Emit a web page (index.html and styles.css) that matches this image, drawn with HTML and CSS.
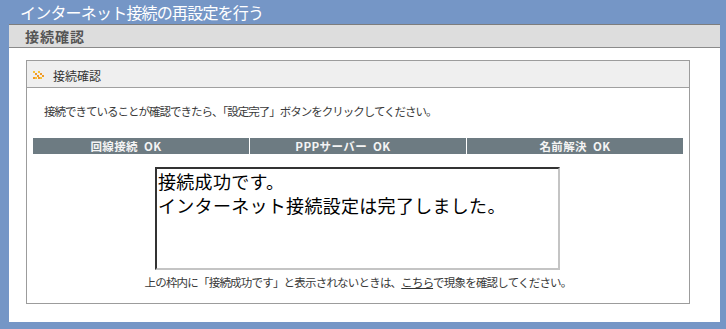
FILE: index.html
```html
<!DOCTYPE html>
<html lang="ja">
<head>
<meta charset="utf-8">
<link rel="stylesheet" href="styles.css">
</head>
<body>
<div class="title">インターネット接続の再設定を行う</div>
<div class="main">
  <div class="main-head">接続確認</div>
  <div class="panel">
    <div class="panel-head">
      <svg class="icon" width="11" height="8" viewBox="0 0 11 8">
        <rect x="0" y="0" width="2" height="2" fill="#f7c23a"/>
        <rect x="2" y="2" width="2" height="2" fill="#f09a28"/>
        <rect x="4" y="4" width="2" height="2" fill="#f09a28"/>
        <rect x="2" y="6" width="2" height="2" fill="#f7c23a"/>
        <rect x="5" y="0" width="2" height="2" fill="#f7c23a"/>
        <rect x="7" y="2" width="2" height="2" fill="#f09a28"/>
        <rect x="9" y="4" width="2" height="2" fill="#f09a28"/>
        <rect x="7" y="6" width="2" height="2" fill="#f7c23a"/>
        <rect x="0" y="6" width="2" height="2" fill="#f09a28"/>
        <rect x="5" y="6" width="2" height="2" fill="#f09a28"/>
      </svg>
      <span>接続確認</span>
    </div>
    <div class="panel-body">
      <p class="note">接続できていることが確認できたら、「設定完了」ボタンをクリックしてください。</p>
      <div class="status">
        <div class="cell shift">回線接続&nbsp;&nbsp;OK</div>
        <div class="cell shift">PPPサーバー&nbsp;&nbsp;OK</div>
        <div class="cell">名前解決&nbsp;&nbsp;OK</div>
      </div>
      <div class="result">接続成功です。<br>インターネット接続設定は完了しました。</div>
      <p class="foot">上の枠内に「接続成功です」と表示されないときは、<a class="link">こちら</a>で現象を確認してください。</p>
    </div>
  </div>
</div>
</body>
</html>
```
FILE: styles.css
```css
* { box-sizing: border-box; }
html, body { margin: 0; padding: 0; }
body {
  background: #7596c6;
  font-family: "Noto Sans CJK JP", "Noto Sans", sans-serif;
  width: 726px;
  height: 329px;
  overflow: hidden;
}
.title {
  height: 24px;
  line-height: 24px;
  padding-left: 20px;
  color: #ffffff;
  font-size: 16px;
  letter-spacing: -0.8px;
}
.main {
  margin: 0 6px 0 9px;
  height: 298px;
  background: #ffffff;
  overflow: hidden;
}
.main-head {
  height: 24px;
  border-top: 1px solid #7d7d7d;
  border-bottom: 1px solid #8a8a8a;
  background: #dddddd;
  color: #555555;
  font-weight: bold;
  font-size: 14px;
  line-height: 22px;
  padding-left: 16px;
  letter-spacing: 1px;
}
.panel {
  margin: 12px 0 0 17px;
  width: 664px;
  height: 244px;
  border: 1px solid #9c9c9c;
}
.panel-head {
  height: 27px;
  background: #efefef;
  border-bottom: 1px solid #a0a0a0;
  display: flex;
  align-items: center;
  padding: 2px 0 0 6px;
  font-size: 12px;
  color: #333333;
}
.icon { margin-right: 9px; display: block; }
.note {
  margin: 15px 0 0 17px;
  font-size: 11.5px;
  line-height: 16px;
  color: #3a3a3a;
  letter-spacing: -1px;
}
.status {
  margin: 19px 6px 0 6px;
  height: 16px;
  display: grid;
  grid-template-columns: repeat(3, 1fr);
  gap: 1px;
  background: #ffffff;
}
.cell {
  background: #6d7b82;
  color: #f4f4f4;
  font-weight: bold;
  font-size: 11.5px;
  line-height: 16px;
  text-align: center;
  letter-spacing: 0.4px;
}
.cell.shift { padding-right: 30px; }
.result {
  margin: 13px 0 0 128px;
  width: 405px;
  height: 103px;
  border-top: 2px solid #333333;
  border-left: 2px solid #333333;
  border-right: 2px solid #c4c4c4;
  border-bottom: 2px solid #c4c4c4;
  font-size: 18px;
  line-height: 24px;
  color: #000000;
  padding: 0 0 0 1px;
  letter-spacing: 0.3px;
}
.foot {
  margin: 4px 0 0 0;
  text-align: center;
  font-size: 11.5px;
  line-height: 16px;
  color: #3a3a3a;
  letter-spacing: -0.8px;
}
.link {
  color: #333333;
  text-decoration: underline;
}
```
